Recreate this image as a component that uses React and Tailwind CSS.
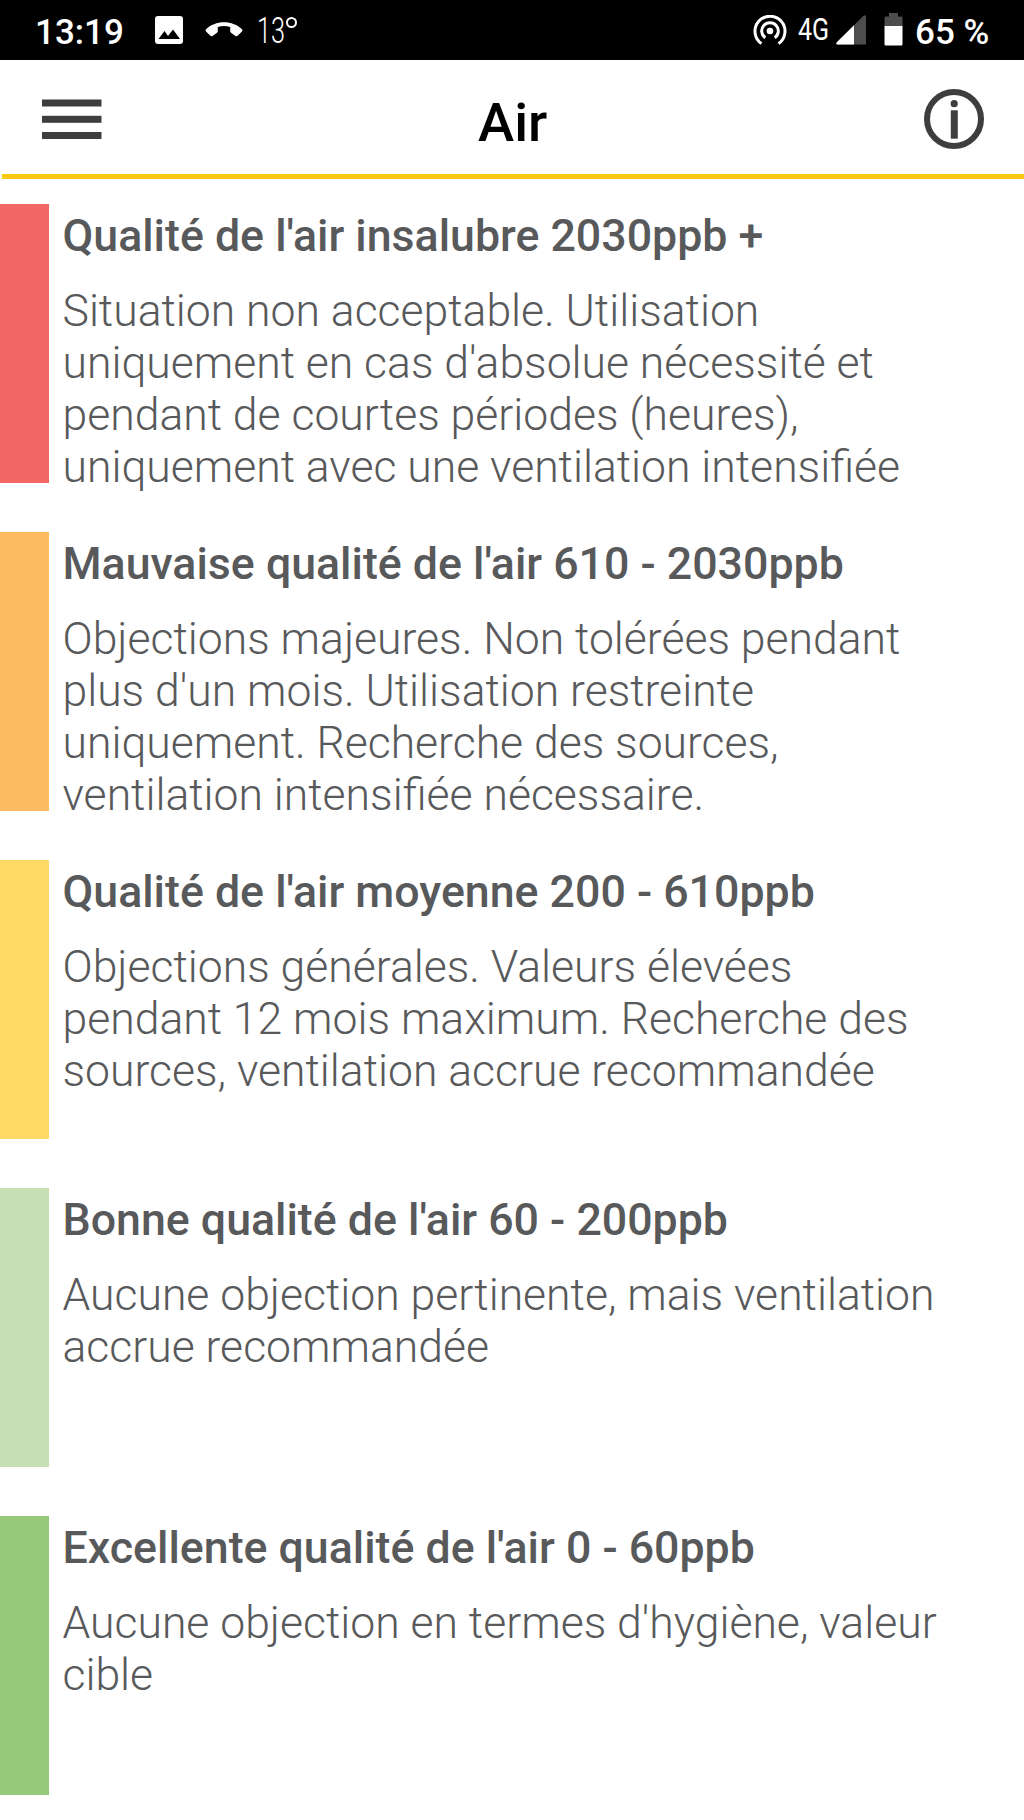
import React from 'react';

const levels = [
  {
    title: "Qualité de l'air insalubre 2030ppb +",
    lines: [
      'Situation non acceptable. Utilisation',
      "uniquement en cas d'absolue nécessité et",
      'pendant de courtes périodes (heures),',
      'uniquement avec une ventilation intensifiée',
    ],
    color: 'bg-[#f36666]',
  },
  {
    title: "Mauvaise qualité de l'air 610 - 2030ppb",
    lines: [
      'Objections majeures. Non tolérées pendant',
      "plus d'un mois. Utilisation restreinte",
      'uniquement. Recherche des sources,',
      'ventilation intensifiée nécessaire.',
    ],
    color: 'bg-[#ffbb61]',
  },
  {
    title: "Qualité de l'air moyenne 200 - 610ppb",
    lines: [
      'Objections générales. Valeurs élevées',
      'pendant 12 mois maximum. Recherche des',
      'sources, ventilation accrue recommandée',
    ],
    color: 'bg-[#ffd966]',
  },
  {
    title: "Bonne qualité de l'air 60 - 200ppb",
    lines: ['Aucune objection pertinente, mais ventilation', 'accrue recommandée'],
    color: 'bg-[#c6e0b4]',
  },
  {
    title: "Excellente qualité de l'air 0 - 60ppb",
    lines: ["Aucune objection en termes d'hygiène, valeur", 'cible'],
    color: 'bg-[#97c97a]',
  },
];

const ImageIcon = () => (
  <svg width="28" height="28" viewBox="0 0 28 28">
    <rect width="28" height="28" rx="3" fill="#fff" />
    <path d="M3.5 23 L9.5 15 L13 20 L18 13.5 L25 23 Z" fill="#000" />
  </svg>
);

const HangUpIcon = () => (
  <svg width="38" height="16" viewBox="0 0 38 16">
    <path
      d="M19 0.3 C12 0.3 5.5 3 1 7.2 Q0 8.3 1 9.4 L5.4 13.8 Q6.4 14.7 7.5 13.9 L12 10.7 Q12.8 10 12.8 9 V4.9 Q19 3 25.2 4.9 V9 Q25.2 10 26 10.7 L30.5 13.9 Q31.6 14.7 32.6 13.8 L37 9.4 Q38 8.3 37 7.2 C32.5 3 26 0.3 19 0.3 Z"
      fill="#fff"
    />
  </svg>
);

const HotspotIcon = () => (
  <svg width="34" height="31" viewBox="0 0 34 31" fill="none" stroke="#fff" strokeWidth="3">
    <circle cx="17" cy="16" r="3.3" fill="#fff" stroke="none" />
    <path d="M12.3 22.8 A8.3 8.3 0 1 1 21.7 22.8" />
    <path d="M8.5 28.6 A15 15 0 1 1 25.5 28.6" />
  </svg>
);

const SignalIcon = () => (
  <svg width="30" height="30" viewBox="0 0 30 30">
    <path d="M1.5 29.5 Q-0.5 29 0.8 27.2 L27.5 0.8 Q29.7 -0.6 30 1.5 V29.5 Z" fill="#4d4d4d" />
    <path d="M1.5 29.5 Q-0.5 29 0.8 27.2 L18 10.2 V29.5 Z" fill="#fff" />
  </svg>
);

const BatteryIcon = () => (
  <svg width="19" height="33" viewBox="0 0 19 33">
    <path d="M5 0 H14 V3.5 H17.5 Q18.5 3.5 18.5 5 V13 H0.5 V5 Q0.5 3.5 1.5 3.5 H5 Z" fill="#4d4d4d" />
    <path d="M0.5 13 H18.5 V31 Q18.5 32.5 17.3 32.5 H1.7 Q0.5 32.5 0.5 31 Z" fill="#fff" />
  </svg>
);

const MenuIcon = () => (
  <svg width="60" height="41" viewBox="0 0 60 41" fill="#3e3e3e">
    <rect y="0.5" width="59.5" height="7" />
    <rect y="16.8" width="59.5" height="7" />
    <rect y="33" width="59.5" height="7" />
  </svg>
);

const InfoIcon = () => (
  <svg width="60" height="60" viewBox="0 0 60 60" fill="#3e3e3e">
    <circle cx="30" cy="30" r="27" fill="none" stroke="#3e3e3e" strokeWidth="6" />
    <circle cx="30.2" cy="14.7" r="3.6" />
    <rect x="26.8" y="21.3" width="7" height="28.4" />
  </svg>
);

const StatusBar = () => (
  <div className="flex h-[60px] items-start justify-between bg-black pl-[35px] pr-[35px] text-white">
    <div className="flex">
      <span className="mt-[12px] w-[120px] text-[35px] font-medium leading-[41px]">13:19</span>
      <div className="mt-[16px]">
        <ImageIcon />
      </div>
      <div className="ml-[22px] mt-[22px]">
        <HangUpIcon />
      </div>
      <span className="ml-[14px] mt-[10px] w-[41px] origin-left scale-x-[0.7] text-[36px] font-light leading-[42px]">13</span>
      {/* degree ring */}
      <span className="-ml-[12px] mt-[17px] h-[11px] w-[11px] rounded-full border-2 border-white" />
    </div>
    <div className="flex">
      <div className="mt-[15px]">
        <HotspotIcon />
      </div>
      <span className="ml-[11px] mt-[12px] w-[38px] origin-left scale-x-[0.82] text-[30.5px] leading-[36px]">4G</span>
      <div className="mt-[15px]">
        <SignalIcon />
      </div>
      <div className="ml-[18px] mt-[13px]">
        <BatteryIcon />
      </div>
      <span className="ml-[12px] mt-[12px] w-[74px] whitespace-nowrap text-[35px] font-medium leading-[41px]">65 %</span>
    </div>
  </div>
);

const Level = ({ level }) => (
  <section className="flex h-[279px]">
    <div className={`w-[49px] shrink-0 ${level.color}`} />
    <div className="ml-[13.5px] whitespace-nowrap">
      <h2 className="mt-[6px] text-[44.7px] font-medium leading-[52px]">{level.title}</h2>
      <div className="mt-[23px] text-[44.5px] font-light leading-[52.1px]">
        {level.lines.map((line) => (
          <p key={line}>{line}</p>
        ))}
      </div>
    </div>
  </section>
);

export default function App() {
  return (
    <div className="h-[1820px] w-[1024px] overflow-hidden bg-white font-['Roboto',sans-serif] text-[#58595b]">
      <StatusBar />
      <header className="flex h-[114px] items-start justify-between pl-[41.5px] pr-[40px]">
        <div className="mt-[39px]">
          <MenuIcon />
        </div>
        <h1 className="mt-[30px] text-[54.5px] font-medium leading-[64px] text-black">Air</h1>
        <div className="mt-[29px]">
          <InfoIcon />
        </div>
      </header>
      <div className="ml-[2px] h-[5px] bg-[#fbc814]" />
      <main className="flex flex-col gap-[49px] pt-[25px]">
        {levels.map((level) => (
          <Level key={level.title} level={level} />
        ))}
      </main>
    </div>
  );
}
